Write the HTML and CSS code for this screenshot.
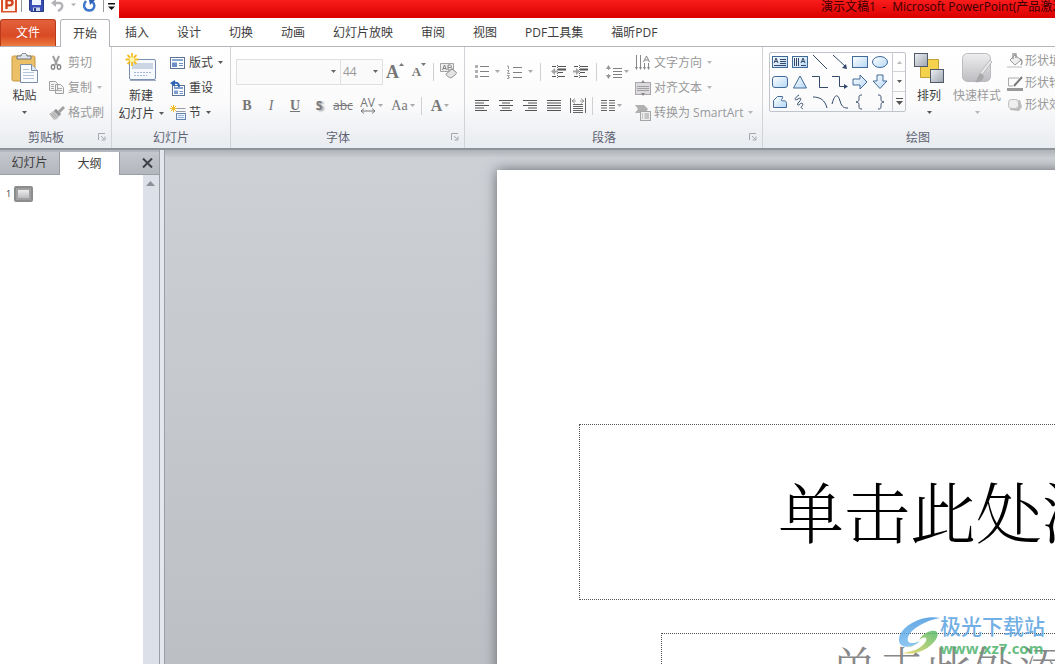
FILE: index.html
```html
<!DOCTYPE html>
<html lang="zh-CN">
<head>
<meta charset="utf-8">
<title>演示文稿1 - Microsoft PowerPoint</title>
<link rel="stylesheet" href="styles.css">
</head>
<body>
<svg class="defs" aria-hidden="true">
  <defs>
    <linearGradient id="blue" x1="0" y1="0" x2="1" y2="1"><stop offset="0" stop-color="#fff"/><stop offset="1" stop-color="#b4d7f5"/></linearGradient>
    <linearGradient id="grey" x1="0" y1="0" x2="0" y2="1"><stop offset="0" stop-color="#eeeeef"/><stop offset="1" stop-color="#bdbdc1"/></linearGradient>
    <linearGradient id="steel" x1="0" y1="0" x2="1" y2="1"><stop offset="0" stop-color="#eef0f4"/><stop offset="1" stop-color="#9da4af"/></linearGradient>
    <linearGradient id="mark" x1="0" y1="0" x2="0" y2="1"><stop offset="0" stop-color="#4b9be0"/><stop offset="1" stop-color="#79bdf0"/></linearGradient>
    <linearGradient id="leaf" x1="0" y1="1" x2="1" y2="0"><stop offset="0" stop-color="#e9d65c"/><stop offset="1" stop-color="#4fb96b"/></linearGradient>
    <symbol id="caret" viewBox="0 0 5 3"><path d="M0 0h5L2.500 3z" fill="currentColor"/></symbol>
    <symbol id="launch" viewBox="0 0 8 8"><path d="M.5 7V.5H7M3 3l3 3M7 3.500V7H3.500" fill="none" stroke="currentColor"/></symbol>
    <symbol id="lines" viewBox="0 0 14 13"><path d="M0 1.500h14M0 6.500h14M0 11.500h14M0 4h14M0 9h14" stroke="currentColor" fill="none"/></symbol>
  </defs>
</svg>

<header class="titlebar">
  <div class="quick">
    <svg class="app-logo" width="16" height="13" viewBox="0 0 16 13"><path d="M0 0h16v12.500H0z" fill="#d9532c"/><path d="M2 0h12v11H2z" fill="#fff3ec"/><path d="M5.500 9V0h3.200c3.800 0 3.800 5.300 0 5.300H5.500" fill="none" stroke="#cf3f18" stroke-width="2.300"/></svg>
    <i class="bar"></i>
    <button aria-label="保存"><svg width="15" height="12" viewBox="0 0 15 12"><path d="M.5 0h14v11.500H2L.5 10z" fill="#3b50b5" stroke="#283985"/><path d="M3 0h9v5H3z" fill="#eef4ff"/><path d="M4 7.500h7V11H4z" fill="#cbd5f0"/><path d="M5 8h2v3H5z" fill="#283985"/></svg></button>
    <button aria-label="撤消"><svg width="25" height="12" viewBox="0 0 25 12"><path d="M2 3h6c5 0 4 6-1 8" fill="none" stroke="#b2b4b9" stroke-width="2.400"/><path d="M0 3l5-4v8z" fill="#b2b4b9"/><path d="M20 3.500h5L22.500 6z" fill="#aaa"/></svg></button>
    <button aria-label="重复"><svg width="13" height="12" viewBox="0 0 13 12"><path d="M3 1C-1 6 2 10.500 6.500 10.500S13 5 9.500 2" fill="none" stroke="#3d76ca" stroke-width="2.400"/><path d="M6 0h6L7 5z" fill="#2f62b5"/></svg></button>
    <i class="bar"></i>
    <button class="more" aria-label="自定义快速访问工具栏"><svg width="7" height="7" viewBox="0 0 7 7"><path d="M0 0h7v1.500H0zM0 3.500h7L3.500 7z" fill="#111"/></svg></button>
  </div>
  <h1 class="window-title">演示文稿1&nbsp; - &nbsp;Microsoft PowerPoint(产品激活失败)</h1>
</header>

<nav class="tabs">
  <button class="tab file">文件</button>
  <button class="tab active">开始</button>
  <button class="tab">插入</button>
  <button class="tab">设计</button>
  <button class="tab">切换</button>
  <button class="tab">动画</button>
  <button class="tab">幻灯片放映</button>
  <button class="tab">审阅</button>
  <button class="tab">视图</button>
  <button class="tab">PDF工具集</button>
  <button class="tab">福昕PDF</button>
</nav>

<section class="ribbon">
  <section class="group clipboard">
    <div class="body">
      <button class="big">
        <svg width="28" height="30" viewBox="0 0 28 30"><rect x="1" y="3" width="23" height="25" rx="1.500" fill="#ecc067" stroke="#c79842"/><path d="M6 6V3h4c0-4 6-4 6 0h4v3z" fill="#dfe3ea" stroke="#70757e"/><path d="M9.500 11.500h11l6 6v12h-17z" fill="#fafcff" stroke="#7a8da8"/><path d="M20.500 11.500v6h6" fill="#dce7f5" stroke="#7a8da8"/><path d="M12 16.500h6M12 19.500h11M12 22.500h11M12 25.500h11" stroke="#b3c6dd"/></svg>
        <span>粘贴</span><svg class="caret"><use href="#caret"/></svg>
      </button>
      <div class="rows">
        <button class="row off"><svg class="ico" viewBox="0 0 16 16"><path d="M4 1l4 9M10 1L6 10" fill="none" stroke="#a0a0a0" stroke-width="2"/><ellipse cx="4" cy="12" rx="1.700" ry="2.300" fill="none" stroke="#888" stroke-width="1.400"/><ellipse cx="10" cy="12" rx="1.700" ry="2.300" fill="none" stroke="#888" stroke-width="1.400"/></svg>剪切</button>
        <button class="row off"><svg class="ico" viewBox="0 0 16 16"><path d="M.5 1.500h6l2 2v7h-8zM6.500 4.500h5l3 3v6h-8z" fill="#f4f4f4" stroke="#a0a0a0"/><path d="M2 4.500h3M2 6.500h3M2 8.500h3M8 8.500h5M8 10.500h5" stroke="#aaa"/></svg>复制<svg class="caret"><use href="#caret"/></svg></button>
        <button class="row off"><svg class="ico" viewBox="0 0 16 16"><path d="M15 2l-5 5" stroke="#a0a0a0" stroke-width="3"/><path d="M7 4l5 5-4 5-3 1-5-6z" fill="#c4c4c4"/><path d="M7 4l5 5-2 2-5-5z" fill="#929292"/><path d="M2 9l4 4M4 8l4 4" stroke="#aaa"/></svg>格式刷</button>
      </div>
    </div>
    <footer>剪贴板<button class="launch" aria-label="剪贴板选项"><svg width="8" height="8"><use href="#launch"/></svg></button></footer>
  </section>

  <section class="group slides">
    <div class="body">
      <button class="big">
        <svg width="32" height="30" viewBox="0 0 32 30"><rect x="4.500" y="6.500" width="26" height="20" rx="1.500" fill="#f6f9fd" stroke="#7b8fae"/><path d="M7 10h21v6H7z" fill="#cbd5e4"/><path d="M9 19.500h17M9 22.500h13" stroke="#a4b7d3" stroke-dasharray="2 1"/><path d="M5 27.500h26" stroke="#9facbf"/><path d="M7 0v13M.5 6.500h13M2.500 2l9 9M11.500 2l-9 9" stroke="#f1bf25" stroke-width="1.800"/><circle cx="7" cy="6.500" r="2.500" fill="#fff7b0"/></svg>
        <span>新建</span><span class="with-caret">幻灯片<svg class="caret"><use href="#caret"/></svg></span>
      </button>
      <div class="rows">
        <button class="row"><svg class="ico" viewBox="0 0 16 16"><rect x=".5" y="2.500" width="14" height="11" fill="#fff" stroke="#5c7396"/><path d="M2 4h11v2H2z" fill="#8aa8d4"/><path d="M2 7.500h5V12H2z" fill="#6b8fc6"/><path d="M9 8.500h4M9 10.500h4" stroke="#6b8fc6"/></svg>版式<svg class="caret"><use href="#caret"/></svg></button>
        <button class="row"><svg class="ico" viewBox="0 0 16 16"><rect x="2.500" y="5.500" width="12" height="10" fill="#fff" stroke="#5c7396"/><path d="M4 7h9v2H4zM4 10.500h4V14H4z" fill="#7d9fd0"/><path d="M9.500 11.500H13M9.500 13.500H13" stroke="#6b8fc6"/><path d="M3 3c4-1 6 0 6 4" fill="none" stroke="#2e64b4" stroke-width="2"/><path d="M0 3l5-3v7z" fill="#2e64b4"/></svg>重设</button>
        <button class="row"><svg class="ico" viewBox="0 0 16 16"><path d="M3.500 0v7M0 3.500h7M1 1l5 5M6 1L1 6" stroke="#f0bd28"/><path d="M7 3.500h8.500M6 6.500h9.500" stroke="#979ca6"/><rect x="6.500" y="8.500" width="9" height="6" fill="#e8f1fb" stroke="#6885ad"/><path d="M8 10.500h6M8 12.500h6" stroke="#9bb6dc"/></svg>节<svg class="caret"><use href="#caret"/></svg></button>
      </div>
    </div>
    <footer>幻灯片</footer>
  </section>

  <section class="group font">
    <div class="body stack">
      <div class="line">
        <label class="combo name"><select aria-label="字体" disabled><option></option></select><svg class="caret"><use href="#caret"/></svg></label>
        <label class="combo size"><select aria-label="字号" disabled><option>44</option></select><svg class="caret"><use href="#caret"/></svg></label>
        <button class="tool" aria-label="增大字体"><span class="serif large">A</span><svg class="tick" width="5" height="3" viewBox="0 0 5 3"><path d="M0 3h5L2.500 0z" fill="currentColor"/></svg></button>
        <button class="tool" aria-label="缩小字体"><span class="serif small">A</span><svg class="tick" width="5" height="3"><use href="#caret"/></svg></button>
        <i class="sep narrow"></i>
        <button class="tool" aria-label="清除格式"><svg width="17" height="17" viewBox="0 0 17 17"><path d="M.5.5h13v8H.5z" fill="#eee" stroke="#a5a5a5"/><path d="M2.500 7L4.500 2l2 5M3 5.500h3M8 2v5h2.500c2 0 2-2.500 0-2.500H8M8 2h2c2 0 2 2.500 0 2.500" fill="none" stroke="#868686"/><path d="M6 11l6-5 4 3c1 1 0 2-1 3l-4 3c-1 0-6-3-5-4z" fill="#e4e4e4" stroke="#929292"/></svg></button>
      </div>
      <div class="line format">
        <button class="tool serif"><b>B</b></button>
        <button class="tool serif light"><em>I</em></button>
        <button class="tool serif"><u>U</u></button>
        <button class="tool shadow">S</button>
        <button class="tool strike">abc</button>
        <button class="tool wide" aria-label="字符间距"><span class="spacing">AV<svg width="16" height="6" viewBox="0 0 16 6"><path d="M1 3h14M4 .5L1 3l3 2.500M12 .5L15 3l-3 2.500" fill="none" stroke="currentColor"/></svg></span><svg class="caret"><use href="#caret"/></svg></button>
        <button class="tool wide serif light">Aa<svg class="caret"><use href="#caret"/></svg></button>
        <i class="sep narrow"></i>
        <button class="tool wide color" aria-label="字体颜色"><span class="serif">A</span><svg class="caret"><use href="#caret"/></svg></button>
      </div>
    </div>
    <footer>字体<button class="launch" aria-label="字体选项"><svg width="8" height="8"><use href="#launch"/></svg></button></footer>
  </section>

  <section class="group paragraph">
    <div class="body">
      <div class="stack">
        <div class="line">
          <button class="tool list" aria-label="项目符号"><svg width="14" height="13" viewBox="0 0 14 13"><path d="M5 1.500h9M5 6.500h9M5 11.500h9" stroke="#808080"/><path d="M0 0h3v3H0zM0 5h3v3H0zM0 10h3v3H0z" fill="#b0b0b0"/></svg><svg class="caret"><use href="#caret"/></svg></button>
          <button class="tool list" aria-label="编号"><svg width="15" height="14" viewBox="0 0 15 14"><path d="M6 2.500h9M6 7.500h9M6 12.500h9" stroke="#808080"/><path d="M0 1h1.500v3M0 5.500h2L.5 8.500H3M0 10.500h2.500L1 12l1.500.5-.5 1H0" fill="none" stroke="#a0a0a0"/></svg><svg class="caret"><use href="#caret"/></svg></button>
          <i class="sep"></i>
          <button class="tool indent" aria-label="减少缩进"><svg width="16" height="14" viewBox="0 0 16 14"><path d="M1 1.500h4M7 1.500h8M7 7.500h5M1 11.500h4M7 11.500h7" stroke="#555"/><path d="M7 4.500h8" stroke="#555" stroke-width="2"/><path d="M6.500 0v14" stroke="#666" stroke-dasharray="1 1"/><path d="M0 6.500L4 3v2.500h3v2H4V10z" fill="#a5a5a5"/></svg></button>
          <button class="tool indent" aria-label="增加缩进"><svg width="16" height="14" viewBox="0 0 16 14"><path d="M1 1.500h4M7 1.500h8M7 7.500h5M1 11.500h4M7 11.500h7" stroke="#555"/><path d="M7 4.500h8" stroke="#555" stroke-width="2"/><path d="M6.500 0v14" stroke="#666" stroke-dasharray="1 1"/><path d="M7 6.500L3 3v2.500H0v2h3V10z" fill="#a5a5a5"/></svg></button>
          <i class="sep"></i>
          <button class="tool wide" aria-label="行距"><svg width="16" height="16" viewBox="0 0 16 16"><path d="M7 4.500h9M7 7.500h9M7 10.500h9M7 13.500h9" stroke="#808080"/><path d="M2.500 2v4M2.500 10v4" fill="none" stroke="#999"/><path d="M0 5l2.500-4L5 5zM0 11l2.500 4L5 11z" fill="#999"/></svg><svg class="caret"><use href="#caret"/></svg></button>
        </div>
        <div class="line format">
          <button class="tool" aria-label="左对齐"><svg width="14" height="13" viewBox="0 0 14 13"><path d="M0 1.500h14M0 4h9M0 6.500h14M0 9h9M0 11.500h12" stroke="#555"/></svg></button>
          <button class="tool" aria-label="居中"><svg width="14" height="13" viewBox="0 0 14 13"><path d="M0 1.500h14M3 4h8M0 6.500h14M3 9h8M1 11.500h12" stroke="#555"/></svg></button>
          <button class="tool" aria-label="右对齐"><svg width="14" height="13" viewBox="0 0 14 13"><path d="M0 1.500h14M5 4h9M0 6.500h14M5 9h9M2 11.500h12" stroke="#555"/></svg></button>
          <button class="tool dark" aria-label="两端对齐"><svg width="14" height="13"><use href="#lines"/></svg></button>
          <button class="tool" aria-label="分散对齐"><svg width="16" height="16" viewBox="0 0 16 16"><path d="M.5 0v15M15.500 0v15M3 6.500h10M3 8.500h10M3 10.500h10M3 12.500h10M3 14.500h10" stroke="#666"/><path d="M2 3h4M10 3h4M5 .5L2 3l3 2.500M11 .5L14 3l-3 2.500" stroke="#999" fill="none"/></svg></button>
          <i class="sep narrow"></i>
          <button class="tool wide" aria-label="分栏"><svg width="14" height="13" viewBox="0 0 14 13"><path d="M0 1.500h6M8 1.500h6M0 4h6M8 4h6M0 6.500h6M8 6.500h6M0 9h6M8 9h6M0 11.500h6M8 11.500h6" stroke="#666"/></svg><svg class="caret"><use href="#caret"/></svg></button>
        </div>
      </div>
      <div class="rows">
        <button class="row off"><svg class="ico" viewBox="0 0 16 16"><path d="M1.500 0v13M5.500 0v13M9.500 8v5M13.500 8v5M8.500 7l3-6 3 6M9.500 5h4" fill="none" stroke="#888"/><path d="M0 12h3l-1.500 3zM4 12h3l-1.500 3zM8 12h3l-1.500 3zM12 12h3l-1.500 3z" fill="#888"/></svg>文字方向<svg class="caret"><use href="#caret"/></svg></button>
        <button class="row off"><svg class="ico" viewBox="0 0 16 16"><rect x=".5" y="2.500" width="15" height="12" fill="#dcd9df" stroke="#aaa6ae"/><path d="M2 6.500h12M2 8.500h12M2 10.500h12" stroke="#a0a0a0"/><path d="M6 3l2-3 2 3zM6 13l2 3 2-3z" fill="#888"/></svg>对齐文本<svg class="caret"><use href="#caret"/></svg></button>
        <button class="row off"><svg class="ico" viewBox="0 0 16 16"><path d="M0 0h9l4 4-3 4H0l3-4z" fill="#b0b0b0"/><rect x="5.500" y="6.500" width="10" height="9" fill="#eee" stroke="#a5a5a5"/><path d="M7 9h1M9.500 9H14M7 11h1M9.500 11H14M7 13h1M9.500 13H14" stroke="#999"/></svg>转换为 SmartArt<svg class="caret"><use href="#caret"/></svg></button>
      </div>
    </div>
    <footer>段落<button class="launch" aria-label="段落选项"><svg width="8" height="8"><use href="#launch"/></svg></button></footer>
  </section>

  <section class="group drawing">
    <div class="body">
      <div class="gallery">
        <div class="shapes">
          <button aria-label="文本框"><svg viewBox="0 0 16 14"><rect x=".5" y="1.500" width="15" height="11"/><path d="M2 8l2-5 2 5M3 6.500h2M8 4.500h6M8 6.500h6M8 8.500h6M2 10.500h12"/></svg></button>
          <button aria-label="竖排文本框"><svg viewBox="0 0 16 14"><rect x=".5" y="1.500" width="15" height="11"/><path d="M9 8l2-5 2 5M10 6.500h2M2.500 3v8M4.500 3v8M6.500 3v8M9 10.500h5"/></svg></button>
          <button aria-label="直线"><svg viewBox="0 0 16 14"><path d="M1 0l14 14"/></svg></button>
          <button aria-label="箭头"><svg viewBox="0 0 16 14"><path d="M1 0l13 12"/><path class="solid" d="M15 14l-5-1 4-4z"/></svg></button>
          <button aria-label="矩形"><svg viewBox="0 0 16 14"><rect x=".5" y="1.500" width="15" height="11"/></svg></button>
          <button aria-label="椭圆"><svg viewBox="0 0 16 14"><ellipse cx="8" cy="7" rx="7.500" ry="5.500"/></svg></button>
          <button aria-label="圆角矩形"><svg viewBox="0 0 16 14"><rect x=".5" y="1.500" width="15" height="11" rx="2.500"/></svg></button>
          <button aria-label="三角形"><svg viewBox="0 0 16 14"><path class="fill" d="M8 1l6.500 12h-13z"/></svg></button>
          <button aria-label="肘形连接符"><svg viewBox="0 0 16 14"><path d="M0 1.500h7.500v11H16"/></svg></button>
          <button aria-label="肘形箭头"><svg viewBox="0 0 16 14"><path d="M0 1.500h7.500v10H15"/><path class="solid" d="M16 11.500L12 9v5z"/></svg></button>
          <button aria-label="右箭头"><svg viewBox="0 0 16 14"><path class="fill" d="M1 4h7V0l7 7-7 7v-4H1z"/></svg></button>
          <button aria-label="下箭头"><svg viewBox="0 0 16 14"><path class="fill" d="M5 0h6v6h4l-7 7.500L1 6h4z"/></svg></button>
          <button aria-label="任意多边形"><svg viewBox="0 0 16 14"><path class="fill" d="M1.500 12.500v-7l4-4h5c1 2-2 3-1 4 2 1 5-1 5 3v4z"/></svg></button>
          <button aria-label="自由曲线"><svg viewBox="0 0 16 14"><path d="M7 0C1 4 3 6 6 4s4 0 1 3-1 4 1 2 4 0 2 2 0 2 1 3"/></svg></button>
          <button aria-label="弧形"><svg viewBox="0 0 16 14"><path d="M1 2c7 0 12 3 14 11"/></svg></button>
          <button aria-label="曲线"><svg viewBox="0 0 16 14"><path d="M0 9C3-2 6-1 8 6s5 7 8 7"/></svg></button>
          <button aria-label="左大括号"><svg viewBox="0 0 16 14"><path d="M10 0C7 0 7 1 7 3s0 4-3 4c3 0 3 2 3 4s0 3 3 3"/></svg></button>
          <button aria-label="右大括号"><svg viewBox="0 0 16 14"><path d="M6 0c3 0 3 1 3 3s0 4 3 4c-3 0-3 2-3 4s0 3-3 3"/></svg></button>
        </div>
        <div class="scroller">
          <button class="off" aria-label="上一行"><svg width="5" height="3" viewBox="0 0 5 3"><path d="M0 3h5L2.500 0z" fill="currentColor"/></svg></button>
          <button aria-label="下一行"><svg class="caret"><use href="#caret"/></svg></button>
          <button aria-label="更多"><svg width="7" height="7" viewBox="0 0 7 7"><path d="M0 .5h7" stroke="currentColor"/><path d="M0 3h7L3.500 7z" fill="currentColor"/></svg></button>
        </div>
      </div>
      <button class="big arrange">
        <svg width="32" height="30" viewBox="0 0 32 30"><path d="M7.500 6.500h18v18h-18z" fill="#f5d24e" stroke="#c3a036"/><rect x="1.500" y=".5" width="13" height="13" fill="url(#steel)" stroke="#50596a"/><rect x="17.500" y="16.500" width="13" height="13" fill="url(#steel)" stroke="#50596a"/></svg>
        <span>排列</span><svg class="caret"><use href="#caret"/></svg>
      </button>
      <button class="big off styles">
        <svg width="32" height="30" viewBox="0 0 32 30"><rect x="1.500" y=".5" width="28" height="28" rx="5" fill="url(#grey)" stroke="#bbb9bf"/><path d="M31 9L21 22l-3-1L29 7z" fill="#e6e6e6" stroke="#bbb"/><path d="M20 20l3 3c-1 5-5 7-9 6 3-2 2-7 6-9z" fill="#a9a9ac"/></svg>
        <span>快速样式</span><svg class="caret"><use href="#caret"/></svg>
      </button>
      <div class="rows compact">
        <button class="row off"><svg class="ico" viewBox="0 0 16 16"><path d="M3 7l5-5 6 5-6 5z" fill="#eee" stroke="#999"/><path d="M6 6V1h3v4M13 6c3 1 2 4 1 6" fill="none" stroke="#999" stroke-width="1.400"/><path d="M0 13h15v2H0z" fill="#ddd"/></svg>形状填充<svg class="caret"><use href="#caret"/></svg></button>
        <button class="row off"><svg class="ico" viewBox="0 0 16 16"><path d="M12 3H1.500v8H6" fill="none" stroke="#aaa"/><path d="M15 2l-8 9" stroke="#777" stroke-width="2"/><path d="M0 13h16v3H0z" fill="#999"/></svg>形状轮廓<svg class="caret"><use href="#caret"/></svg></button>
        <button class="row off"><svg class="ico" viewBox="0 0 16 16"><path d="M4 5l9-2 2 7-3 4-9-1z" fill="#bbb"/><rect x="1.500" y="2.500" width="10" height="9" rx="3" fill="#eee" stroke="#bcbcbc"/></svg>形状效果<svg class="caret"><use href="#caret"/></svg></button>
      </div>
    </div>
    <footer>绘图</footer>
  </section>
</section>

<main class="workspace">
  <aside class="outline">
    <div class="pane-tabs">
      <button class="pane-tab">幻灯片</button>
      <button class="pane-tab active">大纲</button>
      <button class="close" aria-label="关闭"><svg width="11" height="10" viewBox="0 0 11 10"><path d="M1 .5l9 9M10 .5l-9 9" stroke="#3d4045" stroke-width="2"/></svg></button>
    </div>
    <div class="pane-body">
      <div class="entry">
        <span>1</span>
        <svg width="19" height="16" viewBox="0 0 19 16"><rect x="1" y="1" width="17" height="14" rx="1" fill="#a0a0a0" stroke="#8c8c8c" stroke-width="2"/><path d="M4 4h11v8H4z" fill="url(#grey)"/></svg>
      </div>
      <div class="scroll"><svg width="9" height="5" viewBox="0 0 9 5"><path d="M0 5h9L4.500 0z" fill="#8c9097"/></svg></div>
    </div>
  </aside>
  <div class="splitter"></div>
  <div class="canvas">
    <article class="slide">
      <h2 class="holder title">单击此处添加标题</h2>
      <p class="holder subtitle">单击此处添加副标题</p>
    </article>
    <div class="watermark">
      <svg width="42" height="40" viewBox="0 0 42 40"><path d="M42 2C25-2 2 10 1 23c-1 10 14 10 21 2-8 4-14 2-12-4C13 13 26 5 42 2z" fill="url(#mark)"/><path d="M9 31c15-1 9-12 24-16 9-2 8 6 2 12-8 9-21 12-31 10 9-1 20-4 24-12 2-5-4-4-8 0-3 4-6 7-11 6z" fill="url(#leaf)"/></svg>
      <div><strong>极光下载站</strong><span>www.xz7.com</span></div>
    </div>
  </div>
</main>
</body>
</html>
```

FILE: styles.css
```css
* { box-sizing: border-box; }

body {
  margin: 0;
  height: 100vh;
  overflow: hidden;
  display: flex;
  flex-direction: column;
  background: #fff;
  color: #3c3c3c;
  font: 12px/16px "Open Sans", "Noto Sans CJK SC", sans-serif;
}

button {
  margin: 0;
  padding: 0;
  border: 0;
  background: none;
  color: inherit;
  font: inherit;
  white-space: nowrap;
}

svg { display: block; flex: none; }
.defs { position: absolute; width: 0; height: 0; }
.caret { width: 5px; height: 3px; color: #5a5a5a; }
.off { color: #999; }
.off .caret { color: #b8b8b8; }

.titlebar { display: flex; height: 18px; flex: none; }
.quick {
  flex: none;
  display: flex;
  align-items: flex-start;
  width: 119px;
  padding-left: 1px;
  gap: 7px;
}
.quick .bar { width: 1px; height: 12px; background: #999; }
.quick .bar:nth-child(2) { margin-left: -3px; }
.quick .more { padding-top: 3px; margin-left: -3px; }
.window-title {
  flex: 1;
  margin: 0;
  padding-left: 702px;
  overflow: hidden;
  background: linear-gradient(#fb1c1c, #d90000);
  color: #3a0000;
  font-size: 12px;
  font-weight: 400;
  line-height: 14px;
  white-space: nowrap;
}

.tabs {
  display: flex;
  flex: none;
  height: 29px;
  padding-top: 1px;
  border-bottom: 1px solid #b2b5ba;
}
.tab { padding: 0 14px; height: 27px; }
.tab.file {
  width: 56px;
  margin-right: 4px;
  border: 1px solid #b9391a;
  border-bottom: 0;
  border-radius: 3px 3px 0 0;
  background: linear-gradient(#e2623c, #d94a24 60%, #ee7b3f);
  color: #fff;
}
.tab.active {
  width: 50px;
  height: 28px;
  margin-right: 1px;
  padding: 0;
  border: 1px solid #b2b5ba;
  border-bottom: 0;
  border-radius: 3px 3px 0 0;
  background: #fff;
}

.ribbon {
  display: flex;
  flex: none;
  border-bottom: 2px solid #8e9299;
  background: linear-gradient(#fff, #fbfbfc 55%, #e8ebef);
}
.group {
  flex: none;
  display: flex;
  flex-direction: column;
  padding-top: 3px;
  border-right: 1px solid #d0d3d8;
}
.group footer {
  display: flex;
  justify-content: center;
  align-items: center;
  position: relative;
  height: 23px;
  padding-top: 2px;
  color: #5d6374;
}
.clipboard footer, .font footer, .paragraph footer { padding-right: 19px; }
.launch { position: absolute; right: 5px; top: 8px; color: #a3a7af; }
.body { display: flex; height: 75px; }
.clipboard { width: 112px; }
.slides { width: 119px; }
.font { width: 234px; }
.paragraph { width: 298px; }
.drawing { width: 310px; border-right: 0; }

.big {
  flex: none;
  display: flex;
  flex-direction: column;
  align-items: center;
  padding-top: 3px;
}
.big span { height: 17px; }
.big > svg:first-child { margin-bottom: 5px; }
.big > .caret { margin-top: 6px; }
.with-caret { display: flex; align-items: center; gap: 4px; }
.clipboard .big { width: 49px; }
.slides .big { width: 58px; }
.arrange { width: 46px; }
.styles { width: 50px; }

.rows { flex: none; display: flex; flex-direction: column; }
.row { display: flex; align-items: center; height: 25px; }
.row .ico { width: 16px; height: 16px; margin-right: 3px; }
.row .caret { margin-left: 5px; }
.compact { padding-left: 5px; }
.compact .row { height: 22px; }
.compact .ico { margin-right: 2px; }

.stack { flex: none; display: flex; flex-direction: column; }
.font .body { padding-left: 4px; }
.line { display: flex; align-items: center; height: 43px; color: #777; }
.line.format { height: 25px; }
.line .caret { color: #aaa; }
.tool {
  flex: none;
  display: flex;
  align-items: center;
  justify-content: center;
  width: 24px;
  height: 24px;
}
.tool.wide { width: 32px; gap: 2px; }
.tool.dark { color: #555; }
.tool.list { width: 33px; gap: 6px; }
.tick { align-self: flex-start; margin-top: 3px; }
.sep { flex: none; width: 1px; height: 18px; margin: 0 4px; background: #d0d0d0; }
.sep.narrow { margin: 0 2px; }
.serif { font-family: "Liberation Serif", serif; font-size: 14px; font-weight: 700; }
.large { font-size: 18px; }
.small { font-size: 13px; }
.light { font-weight: 400; }
.shadow { font-weight: 700; text-shadow: 2px 1px 2px #999; }
.strike { text-decoration: line-through; }
.spacing { display: flex; flex-direction: column; align-items: center; line-height: 11px; }
.color { gap: 8px; }
.color .serif { font-size: 16px; }

.combo {
  flex: none;
  display: flex;
  align-items: center;
  height: 26px;
  padding-right: 4px;
  border: 1px solid #e0e0e0;
  background: #fafafa;
}
.combo.name { width: 105px; margin-left: 1px; }
.combo.size { width: 43px; margin-left: -1px; }
.combo select {
  flex: 1;
  min-width: 0;
  padding: 0 0 0 2px;
  border: 0;
  appearance: none;
  background: none;
  color: #999;
  opacity: 1;
  font: inherit;
}
.combo .caret { color: #666; }

.paragraph .stack { width: 165px; padding-left: 5px; }
.paragraph .rows { padding-left: 5px; }
.paragraph .list { padding-left: 1px; }
.paragraph .list + .sep { margin-right: 7px; }
.paragraph .indent { width: 22px; }

.drawing .body { padding-left: 6px; }
.gallery {
  flex: none;
  display: flex;
  height: 60px;
  margin-top: 2px;
  border: 1px solid #c1c5cb;
  border-radius: 2px;
}
.shapes {
  display: grid;
  grid-template-columns: repeat(6, 20px);
  grid-template-rows: repeat(3, 20px);
  width: 122px;
  margin-top: -1px;
}
.shapes button { display: grid; place-items: center; }
.shapes svg {
  width: 16px;
  height: 14px;
  overflow: visible;
  fill: none;
  stroke: #34496b;
}
.shapes rect, .shapes ellipse, .shapes .fill { fill: url(#blue); stroke: #426a98; }
.shapes .solid { fill: #34496b; stroke: none; }
.scroller { display: grid; grid-template-rows: repeat(3, 1fr); width: 13px; border-left: 1px solid #c8ccd2; }
.scroller button { display: grid; place-items: center; border-bottom: 1px solid #d0d3d8; color: #555; }
.scroller button:last-child { border-bottom: 0; }
.scroller .off { color: #bbb; }

.workspace { flex: 1; min-height: 0; display: flex; }
.outline { flex: none; display: flex; flex-direction: column; width: 160px; padding-top: 2px; border-right: 1px solid #9a9fa6; background: #b4b8be; }
.pane-tabs {
  display: flex;
  height: 23px;
  border-bottom: 1px solid #9a9fa6;
  background: linear-gradient(#c4c8cd, #b3b7bd);
}
.pane-tab { width: 60px; border-right: 1px solid #9a9fa6; line-height: 20px; }
.pane-tab.active { height: 23px; background: #fff; }
.close { display: grid; place-items: center; width: 24px; margin-left: auto; }
.pane-body { flex: 1; display: flex; background: #fff; }
.entry { flex: 1; display: flex; align-items: flex-start; gap: 3px; padding: 11px 0 0 6px; font-size: 9px; }
.scroll { width: 16px; padding: 6px 0 0 3px; background: #dce0e8; }
.splitter { flex: none; width: 5px; border-right: 1px solid #9a9fa6; background: #e4e7ec; }

.canvas {
  position: relative;
  flex: 1;
  min-width: 0;
  overflow: hidden;
  padding: 20px 0 0 332px;
  background: linear-gradient(#aeb1b6, #cdd0d5 8px, #bcbfc4);
}
.slide {
  width: 1090px;
  height: 818px;
  padding: 254px 82px 0;
  background: #fff;
  box-shadow: 0 0 12px #63666b;
}
.holder {
  margin: 0;
  border: 1px dotted #555;
  font-family: "Noto Serif CJK SC", "Noto Sans CJK SC", serif;
  font-weight: 300;
  text-align: center;
}
.title { height: 176px; color: #000; font-size: 66px; line-height: 170px; }
.subtitle { height: 209px; margin: 33px 82px 0; color: #888; font-size: 47px; line-height: 64px; }

.watermark {
  position: absolute;
  right: 10px;
  bottom: 6px;
  display: flex;
  align-items: center;
  opacity: 0.85;
}
.watermark div { display: flex; flex-direction: column; }
.watermark strong { color: #5aa2e0; font-size: 21px; font-weight: 500; line-height: 24px; }
.watermark span { color: #4fb36d; font-size: 15px; font-weight: 700; line-height: 20px; }
```
